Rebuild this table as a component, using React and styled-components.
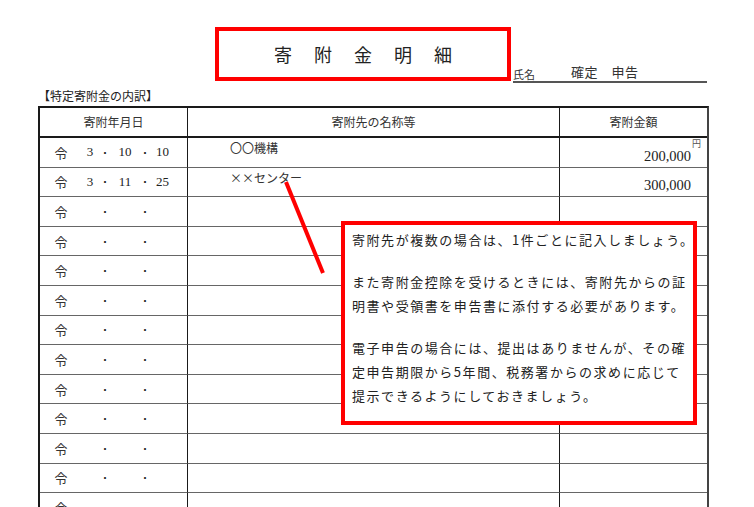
import styled, { createGlobalStyle } from "styled-components";

const GlobalStyle = createGlobalStyle`
  html, body {
    margin: 0;
    padding: 0;
    background: #ffffff;
  }
  body {
    font-family: "Noto Sans CJK JP", "Noto Sans", sans-serif;
    color: #333;
    overflow: hidden;
  }
`;

const JP = `"Noto Sans CJK JP", "Noto Sans", sans-serif`;
const SERIF = `"Liberation Serif", "Noto Sans CJK JP", serif`;

const Page = styled.div`
  position: relative;
  width: 754px;
  height: 507px;
  padding: 27px 0 0 38px;
  box-sizing: border-box;
  overflow: hidden;
`;

const HeaderRow = styled.div`
  display: flex;
  align-items: flex-end;
  padding-left: 177px;
`;

const TitleBox = styled.div`
  width: 296px;
  height: 54px;
  box-sizing: border-box;
  border: 4px solid #ff0000;
  display: flex;
  align-items: center;
  justify-content: center;
  gap: 22px;
  font-family: ${JP};
  font-size: 18px;
  color: #222;
  span {
    line-height: 1;
  }
`;

const NameField = styled.div`
  margin-left: 2px;
  margin-bottom: -2px;
  width: 194px;
  height: 20px;
  border-bottom: 2px solid #555;
  display: flex;
  align-items: flex-end;
  font-family: ${JP};
  color: #333;
`;

const NameLabel = styled.span`
  font-size: 11px;
  line-height: 14px;
  margin-right: 36px;
`;

const NameValue = styled.span`
  font-size: 13px;
  line-height: 18px;
  letter-spacing: 0.5px;
`;

const Caption = styled.div`
  margin-top: 6px;
  height: 17px;
  line-height: 17px;
  font-family: ${JP};
  font-size: 12px;
  color: #222;
`;

const Table = styled.div`
  margin-top: 2px;
  width: 671px;
  box-sizing: border-box;
  border-top: 2px solid #1a1a1a;
  border-left: 2px solid #1a1a1a;
  border-right: 2px solid #444;
  display: grid;
  grid-template-columns: 148px 372px 147px;
  grid-template-rows: 30px;
  grid-auto-rows: 29.6px;
`;

const Cell = styled.div`
  box-sizing: border-box;
  border-bottom: ${(p) => (p.$head ? "2px solid #1a1a1a" : "1px solid #666")};
  border-right: ${(p) => (p.$last ? "none" : "1px solid #1a1a1a")};
  position: relative;
  font-family: ${JP};
  color: #333;
`;

const HeadCell = styled(Cell)`
  display: flex;
  align-items: center;
  justify-content: center;
  font-size: 12px;
  padding-bottom: 2px;
`;

const DateCell = styled(Cell)`
  display: grid;
  grid-template-columns: 42px 16px 14px 26px 14px 21px;
  align-items: center;
  text-align: center;
  font-size: 13px;
  span {
    white-space: nowrap;
  }
`;

const Num = styled.span`
  font-family: ${SERIF};
  font-size: 13px;
  color: #222;
`;

const Dot = styled.span`
  font-size: 10px;
  color: #222;
`;

const NameCell = styled(Cell)`
  padding: 2px 0 0 42px;
  font-size: 12px;
  line-height: 16px;
  color: #333;
`;

const AmountCell = styled(Cell)`
  display: flex;
  justify-content: flex-end;
  align-items: flex-end;
  padding: 0 16px 2px 0;
  font-family: ${SERIF};
  font-size: 14.5px;
  line-height: 18px;
  color: #222;
`;

const Yen = styled.span`
  position: absolute;
  top: 1px;
  right: 6px;
  font-family: ${JP};
  font-size: 9px;
  line-height: 10px;
  color: #555;
`;

const Pointer = styled.svg`
  position: absolute;
  left: 0;
  top: 0;
  pointer-events: none;
`;

const Callout = styled.div`
  position: absolute;
  left: 341px;
  top: 221px;
  width: 356px;
  height: 204px;
  box-sizing: border-box;
  border: 4px solid #ff0000;
  background: #fff;
  padding: 3px 0 0 7px;
  font-family: ${JP};
  font-size: 13px;
  letter-spacing: 1.55px;
  line-height: 24px;
  color: #222;
`;

const Line = styled.div`
  white-space: nowrap;
  height: ${(p) => (p.$blank ? "18px" : "24px")};
`;

const rows = [
  { date: ["3", "10", "10"], name: "〇〇機構", amount: "200,000", yen: true },
  { date: ["3", "11", "25"], name: "××センター", amount: "300,000" },
  ...Array.from({ length: 11 }, () => ({ date: null, name: "", amount: "" })),
];

const notes = [
  "寄附先が複数の場合は、1件ごとに記入しましょう。",
  "",
  "また寄附金控除を受けるときには、寄附先からの証",
  "明書や受領書を申告書に添付する必要があります。",
  "",
  "電子申告の場合には、提出はありませんが、その確",
  "定申告期限から5年間、税務署からの求めに応じて",
  "提示できるようにしておきましょう。",
];

export default function App() {
  return (
    <>
      <GlobalStyle />
      <Page>
        <HeaderRow>
          <TitleBox>
            {"寄附金明細".split("").map((c) => (
              <span key={c}>{c}</span>
            ))}
          </TitleBox>
          <NameField>
            <NameLabel>氏名</NameLabel>
            <NameValue>確定　申告</NameValue>
          </NameField>
        </HeaderRow>
        <Caption>【特定寄附金の内訳】</Caption>
        <Table>
          <HeadCell $head>寄附年月日</HeadCell>
          <HeadCell $head>寄附先の名称等</HeadCell>
          <HeadCell $head $last>寄附金額</HeadCell>
          {rows.map((r, i) => (
            <Row key={i} row={r} />
          ))}
        </Table>
        <Pointer width="754" height="507" viewBox="0 0 754 507">
          <line x1="286" y1="182" x2="323" y2="273" stroke="#ff0000" strokeWidth="4" />
        </Pointer>
        <Callout>
          {notes.map((t, i) => (
            <Line key={i} $blank={!t}>{t}</Line>
          ))}
        </Callout>
      </Page>
    </>
  );
}

function Row({ row }) {
  const d = row.date || ["", "", ""];
  return (
    <>
      <DateCell>
        <span>令</span>
        <Num>{d[0]}</Num>
        <Dot>・</Dot>
        <Num>{d[1]}</Num>
        <Dot>・</Dot>
        <Num>{d[2]}</Num>
      </DateCell>
      <NameCell>{row.name}</NameCell>
      <AmountCell $last>
        {row.yen && <Yen>円</Yen>}
        {row.amount}
      </AmountCell>
    </>
  );
}
